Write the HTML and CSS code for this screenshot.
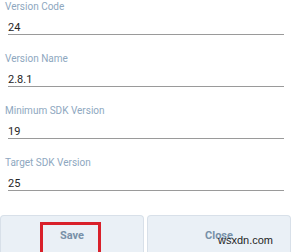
FILE: index.html
```html
<!DOCTYPE html>
<html lang="en">
<head>
    <meta charset="UTF-8">
    <meta name="viewport" content="width=device-width, initial-scale=1.0">
    <title>Edit Manifest</title>
    <link rel="stylesheet" href="styles.css">
</head>
<body>
    <form class="manifest-form">
        <div class="field">
            <div class="field-label">Version Code</div>
            <div class="field-value">24</div>
        </div>
        <div class="field">
            <div class="field-label">Version Name</div>
            <div class="field-value">2.8.1</div>
        </div>
        <div class="field">
            <div class="field-label">Minimum SDK Version</div>
            <div class="field-value">19</div>
        </div>
        <div class="field">
            <div class="field-label">Target SDK Version</div>
            <div class="field-value">25</div>
        </div>
    </form>
    <div class="button-bar">
        <div class="bar-button save-button">
            Save
            <span class="highlight-box"></span>
        </div>
        <div class="bar-button close-button">
            Close
            <span class="watermark">wsxdn.com</span>
        </div>
    </div>
</body>
</html>
```

FILE: styles.css
```css
body {
    margin: 0;
    background-color: #ffffff;
    font-family: Roboto, "Liberation Sans", Arial, sans-serif;
    overflow: hidden;
}
.manifest-form {
    margin: 0;
    padding: 0;
}
.field {
    margin-bottom: 17px;
}
.field-label {
    margin-left: 5px;
    font-size: 10px;
    line-height: 13px;
    color: #8ea7c0;
}
.field-value {
    margin: 9px 7px 0 8px;
    font-size: 11px;
    line-height: 12px;
    color: #262626;
    border-bottom: 1px solid #9a9a9a;
}
.button-bar {
    display: flex;
    gap: 3px;
    margin-top: 24px;
}
.bar-button {
    position: relative;
    flex: 1;
    height: 40px;
    box-sizing: border-box;
    padding-top: 14px;
    text-align: center;
    font-size: 11px;
    line-height: 12px;
    font-weight: bold;
    color: #7890a8;
    background-color: #eaf0f6;
    border: 1px solid #d8e0e9;
    border-bottom: none;
    border-radius: 4px 4px 0 0;
}
.highlight-box {
    position: absolute;
    left: 39px;
    top: 6px;
    width: 61px;
    height: 34px;
    box-sizing: border-box;
    border: 3px solid #d9202a;
}
.watermark {
    position: absolute;
    left: 70px;
    top: 18px;
    font-family: "Liberation Sans", Arial, sans-serif;
    font-size: 11px;
    font-weight: normal;
    line-height: 13px;
    color: #1e1e1e;
}
```
